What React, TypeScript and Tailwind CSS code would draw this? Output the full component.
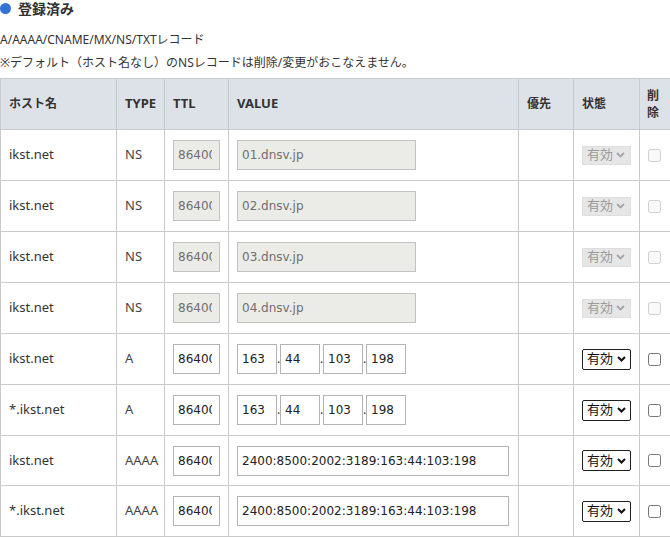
import React from 'react';

type Row = {
  host: string;
  type: string;
  value?: string;
  ip?: string[];
  locked?: boolean;
  wide?: boolean;
};

const rows: Row[] = [
  { host: 'ikst.net', type: 'NS', value: '01.dnsv.jp', locked: true },
  { host: 'ikst.net', type: 'NS', value: '02.dnsv.jp', locked: true },
  { host: 'ikst.net', type: 'NS', value: '03.dnsv.jp', locked: true },
  { host: 'ikst.net', type: 'NS', value: '04.dnsv.jp', locked: true },
  { host: 'ikst.net', type: 'A', ip: ['163', '44', '103', '198'] },
  { host: '*.ikst.net', type: 'A', ip: ['163', '44', '103', '198'] },
  { host: 'ikst.net', type: 'AAAA', value: '2400:8500:2002:3189:163:44:103:198', wide: true },
  { host: '*.ikst.net', type: 'AAAA', value: '2400:8500:2002:3189:163:44:103:198', wide: true },
];

const inputBase =
  "h-[30px] pl-1 border font-['DejaVu_Sans'] text-[12px] outline-none";

const Field = ({ value, locked, width }: { value: string; locked?: boolean; width: string }) => (
  <input
    readOnly
    disabled={locked}
    value={value}
    className={
      inputBase +
      ' ' +
      width +
      (locked
        ? ' bg-[#ebebe7] border-[#c2c2c2] text-[#6f6f6f]'
        : ' bg-white border-[#b3b3b3] text-[#222]')
    }
  />
);

const Status = ({ locked }: { locked?: boolean }) =>
  locked ? (
    <div className="flex items-center justify-between w-[50px] h-[19px] pl-[4px] pr-[5px] bg-[#e6e6e6] border border-[#dedede] text-[13px] text-[#9a9a9a]">
      <span>有効</span>
      <svg width="9" height="6" viewBox="0 0 9 6">
        <path d="M1 1l3.5 3.5L8 1" fill="none" stroke="#a5a5a5" strokeWidth="1.8" />
      </svg>
    </div>
  ) : (
    <div className="flex items-center justify-between w-[50px] h-[21px] pl-[4px] pr-[4px] bg-white border border-[#1f1f1f] rounded-[2px] text-[13px] text-[#111]">
      <span>有効</span>
      <svg width="9" height="6" viewBox="0 0 9 6">
        <path d="M1 1l3.5 3.5L8 1" fill="none" stroke="#111" strokeWidth="2" />
      </svg>
    </div>
  );

const cell = 'flex items-center px-2 border-r border-b border-[#c9c9c9]';

const App = () => {
  return (
    <div className="w-[670px] h-[537px] overflow-hidden bg-white text-[#333] font-['Noto_Sans','Noto_Sans_CJK_JP',sans-serif]">
      <div className="flex items-center h-[17px]">
        <span className="w-[11px] h-[11px] rounded-full bg-[#3371d7] mr-[7px]" />
        <span className="font-bold text-[14px] text-[#333]">登録済み</span>
      </div>
      <div className="mt-[11px] text-[12px] leading-[23px] text-[#333]">
        <div>A/AAAA/CNAME/MX/NS/TXTレコード</div>
        <div>※デフォルト（ホスト名なし）のNSレコードは削除/変更がおこなえません。</div>
      </div>

      <div className="mt-[4px] w-[672px] border-l border-t border-[#c9c9c9] grid grid-cols-[116px_48px_64px_290px_55px_66px_33px]">
        {/* header */}
        <div className={cell + ' h-[51px] bg-[#dde2e9] font-bold text-[12px]'}>ホスト名</div>
        <div className={cell + ' h-[51px] bg-[#dde2e9] font-bold text-[13px]'}>TYPE</div>
        <div className={cell + ' h-[51px] bg-[#dde2e9] font-bold text-[13px]'}>TTL</div>
        <div className={cell + ' h-[51px] bg-[#dde2e9] font-bold text-[13px]'}>VALUE</div>
        <div className={cell + ' h-[51px] bg-[#dde2e9] font-bold text-[12px]'}>優先</div>
        <div className={cell + ' h-[51px] bg-[#dde2e9] font-bold text-[12px]'}>状態</div>
        <div className={cell + ' h-[51px] bg-[#dde2e9] font-bold text-[12px] leading-[17px] !px-[7px]'}>
          <div>
            削<br />除
          </div>
        </div>

        {rows.map((r, i) => {
          const h = i === 6 ? ' h-[50px]' : ' h-[51px]';
          return (
            <React.Fragment key={i}>
              <div className={cell + h + ' text-[13px]'}>{r.host}</div>
              <div className={cell + h + ' text-[13px] text-[#444]'}>{r.type}</div>
              <div className={cell + h}>
                <Field value="86400" locked={r.locked} width="w-[47px] pr-[7px]" />
              </div>
              <div className={cell + h}>
                {r.ip ? (
                  <div className="flex items-center">
                    {r.ip.map((p, j) => (
                      <React.Fragment key={j}>
                        {j > 0 && (
                          <span className="w-[3px] text-[12px] leading-[12px] text-[#333]">.</span>
                        )}
                        <Field value={p} width="w-[40px]" />
                      </React.Fragment>
                    ))}
                  </div>
                ) : (
                  <Field value={r.value || ''} locked={r.locked} width={r.wide ? 'w-[272px]' : 'w-[179px]'} />
                )}
              </div>
              <div className={cell + h}></div>
              <div className={cell + h}>
                <Status locked={r.locked} />
              </div>
              <div className={cell + h}>
                <input type="checkbox" disabled={r.locked} className="w-[13px] h-[13px]" />
              </div>
            </React.Fragment>
          );
        })}
      </div>
    </div>
  );
};

export default App;
